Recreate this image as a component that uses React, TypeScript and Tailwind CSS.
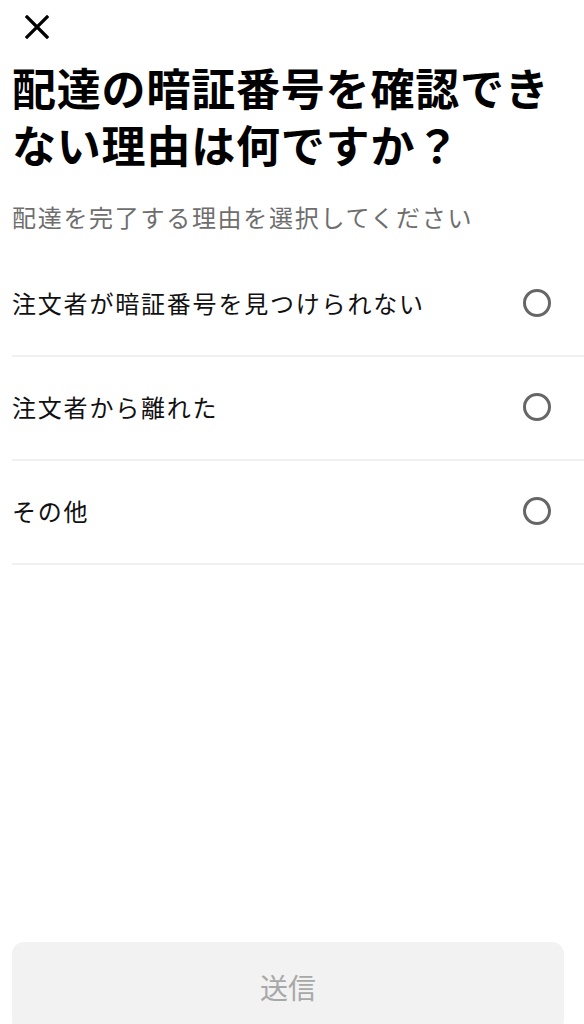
const reasons = [
  '注文者が暗証番号を見つけられない',
  '注文者から離れた',
  'その他',
];

const App = () => {
  return (
    <div
      className="flex h-[1024px] w-full flex-col overflow-hidden bg-white text-black"
      style={{ fontFamily: '"Noto Sans CJK JP", "Noto Sans", sans-serif' }}
    >
      <div className="flex h-[52px] items-start pl-[25px] pt-[15px]">
        <svg width="24" height="24" viewBox="0 0 24 24" fill="none">
          <path d="M2 2L22 22M22 2L2 22" stroke="#000" strokeWidth="3.2" strokeLinecap="square" />
        </svg>
      </div>

      <h1 className="mt-[20px] px-3 text-[44px] font-bold leading-[57px] tracking-[0.8px]">
        配達の暗証番号を確認できない理由は何ですか？
      </h1>

      <p className="mt-[27px] px-3 text-[24px] leading-[34px] tracking-[1.7px] text-[#6e6e6e]">
        配達を完了する理由を選択してください
      </p>

      <ul className="mt-[19px] pl-3">
        {reasons.map((reason) => (
          <li
            key={reason}
            className="flex h-[104px] items-center justify-between border-b-2 border-[#f0f0f0] pb-[2px] pr-[33px]"
          >
            <span className="text-[24px] leading-[34px] tracking-[1.8px] text-[#111]">{reason}</span>
            <span className="h-[28px] w-[28px] rounded-full border-[3px] border-[#666]" />
          </li>
        ))}
      </ul>

      <button
        type="button"
        className="ml-3 mr-5 mt-[377px] h-[90px] shrink-0 rounded-xl bg-[#f2f2f2] text-[28px] text-[#a8a8a8]"
      >
        送信
      </button>
    </div>
  );
};

export default App;
